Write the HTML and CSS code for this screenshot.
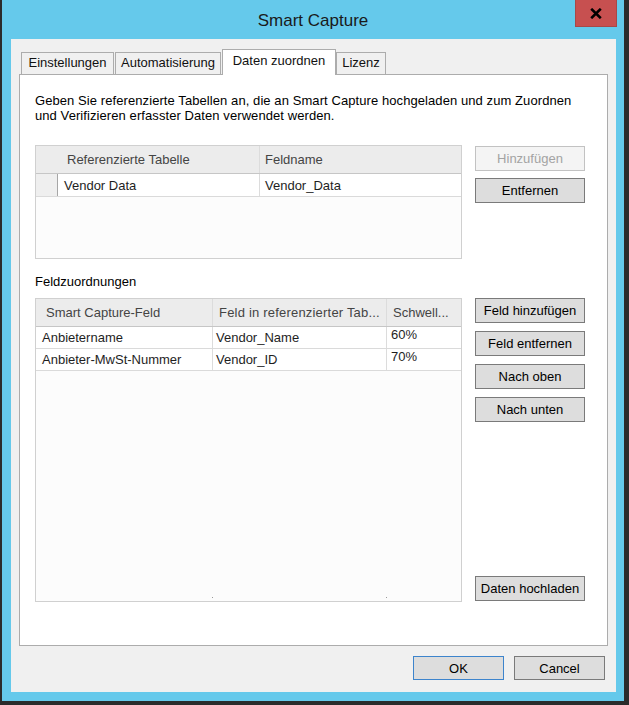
FILE: index.html
```html
<!DOCTYPE html>
<html lang="de">
<head>
<meta charset="utf-8">
<title>Smart Capture</title>
<link rel="stylesheet" href="styles.css">
</head>
<body>
<div class="window">
  <div class="titlebar">
    <div class="title">Smart Capture</div>
    <div class="close">
      <svg width="12" height="11" viewBox="0 0 12 11"><path d="M1.2 0.8 L10.8 10.2 M10.8 0.8 L1.2 10.2" stroke="#000" stroke-width="2.6" fill="none"/></svg>
    </div>
  </div>
  <div class="client">
    <div class="tabs">
      <div class="tab t1">Einstellungen</div>
      <div class="tab t2">Automatisierung</div>
      <div class="tab t3 active">Daten zuordnen</div>
      <div class="tab t4">Lizenz</div>
    </div>
    <div class="panel">
      <p class="desc">Geben Sie referenzierte Tabellen an, die an Smart Capture hochgeladen und zum Zuordnen und Verifizieren erfasster Daten verwendet werden.</p>
      <div class="pair pair-ref">
        <div class="grid grid-ref">
          <div class="ghead">
            <div class="cell rh-head"></div>
            <div class="cell sep c-ref1 hp9">Referenzierte Tabelle</div>
            <div class="cell c-ref2 hp5">Feldname</div>
          </div>
          <div class="grow grow-ref">
            <div class="cell rh"></div>
            <div class="cell sep c-ref1 dp6">Vendor Data</div>
            <div class="cell c-ref2 dp5">Vendor_Data</div>
          </div>
        </div>
        <div class="btns btns-ref">
          <button class="btn disabled">Hinzufügen</button>
          <button class="btn">Entfernen</button>
        </div>
      </div>
      <div class="label">Feldzuordnungen</div>
      <div class="pair pair-map">
        <div class="grid grid-map">
          <div class="ghead">
            <div class="cell sep c-m1 hp10">Smart Capture-Feld</div>
            <div class="cell sep c-m2 hp6 wide">Feld in referenzierter Tab...</div>
            <div class="cell c-m3 hp6">Schwell...</div>
          </div>
          <div class="grow grow-map">
            <div class="cell sep c-m1 dp6">Anbietername</div>
            <div class="cell sep c-m2 dp3">Vendor_Name</div>
            <div class="cell c-m3 dp4 pct">60%</div>
          </div>
          <div class="grow grow-map">
            <div class="cell sep c-m1 dp6">Anbieter-MwSt-Nummer</div>
            <div class="cell sep c-m2 dp3">Vendor_ID</div>
            <div class="cell c-m3 dp4 pct">70%</div>
          </div>
          <div class="gfill"></div>
          <div class="gmarks">
            <div class="mark c-m1"></div>
            <div class="mark c-m2"></div>
          </div>
        </div>
        <div class="btns btns-map">
          <button class="btn">Feld hinzufügen</button>
          <button class="btn">Feld entfernen</button>
          <button class="btn">Nach oben</button>
          <button class="btn">Nach unten</button>
          <button class="btn btn-upload">Daten hochladen</button>
        </div>
      </div>
    </div>
    <div class="footer">
      <button class="btn btn-foot btn-default">OK</button>
      <button class="btn btn-foot">Cancel</button>
    </div>
  </div>
</div>
</body>
</html>
```
FILE: styles.css
```css
* { box-sizing: border-box; }
html, body { margin: 0; padding: 0; }
body {
  width: 629px;
  height: 705px;
  overflow: hidden;
  background: #2b2b2b;
  font-family: "Liberation Sans", Arial, sans-serif;
  font-size: 13px;
  color: #000;
}
.window {
  margin-left: 2px;
  width: 622px;
  height: 701px;
  background: #65c9eb;
  display: flex;
  flex-direction: column;
  padding: 0 8px 9px 9px;
}
.titlebar {
  height: 39px;
  margin: 0 -8px 0 -9px;
  display: grid;
  grid-template-columns: 1fr auto 1fr;
  align-items: start;
}
.title {
  grid-column: 2;
  padding-top: 11px;
  line-height: 20px;
  font-size: 17px;
  color: #1a1a1a;
}
.close {
  grid-column: 3;
  justify-self: end;
  margin-right: 7px;
  width: 42px;
  height: 27px;
  background: #c75050;
  border: 1px solid #a84848;
  border-top: none;
  display: flex;
  align-items: center;
  justify-content: center;
}
.client {
  flex: 1;
  background: #f0f0f0;
  padding: 10px 8px 12px 8px;
  display: flex;
  flex-direction: column;
}
.tabs {
  display: flex;
  align-items: flex-end;
  height: 25px;
  padding-left: 2px;
  position: relative;
  z-index: 1;
}
.tab {
  height: 22px;
  border: 1px solid #acacac;
  border-bottom: none;
  background: #f0f0f0;
  line-height: 20px;
  text-align: center;
  white-space: nowrap;
  color: #111;
}
.t1 { width: 93px; }
.t2 { width: 106px; margin-left: 1px; }
.t3 { width: 114px; margin-left: 1px; }
.t4 { width: 50px; }
.tab.active {
  height: 26px;
  margin-bottom: -1px;
  background: #fff;
  padding-top: 2px;
  line-height: 18px;
}
.panel {
  height: 572px;
  background: #fff;
  border: 1px solid #acacac;
  padding: 18px 0 0 15px;
}
.desc {
  margin: 0;
  max-width: 550px;
  line-height: 15px;
  letter-spacing: 0.08px;
  color: #000;
}
.pair {
  display: flex;
  gap: 13px;
}
.pair-ref { margin-top: 22px; }
.label {
  margin-top: 15px;
  line-height: 15px;
}
.pair-map { margin-top: 9px; }
.grid {
  width: 427px;
  border: 1px solid #d0d0d0;
  background: #fcfcfc;
  display: flex;
  flex-direction: column;
}
.grid-ref { height: 114px; }
.grid-map { height: 304px; }
.ghead {
  display: flex;
  height: 28px;
  background: #ececec;
  border-bottom: 1px solid #c6c6c6;
  color: #444;
  flex: none;
}
.grow {
  display: flex;
  background: #fff;
  border-bottom: 1px solid #dadada;
  color: #1e1e1e;
  flex: none;
}
.grow-ref { height: 23px; }
.grow-map { height: 22px; }
.cell {
  display: flex;
  align-items: center;
  white-space: nowrap;
  overflow: hidden;
}
.wide { letter-spacing: 0.2px; }
.sep { border-right: 1px solid #dcdcdc; }
.rh-head { width: 22px; }
.rh {
  width: 22px;
  background: #efefef;
  border-right: 1px solid #a6a6a6;
}
.c-ref1 { width: 202px; }
.c-ref2 { width: 201px; }
.c-m1 { width: 177px; }
.c-m2 { width: 174px; }
.c-m3 { width: 74px; }
.hp9 { padding-left: 9px; }
.hp10 { padding-left: 10px; }
.hp6 { padding-left: 6px; }
.hp5 { padding-left: 5px; }
.dp6 { padding-left: 6px; }
.dp5 { padding-left: 5px; }
.dp4 { padding-left: 4px; }
.dp3 { padding-left: 3px; }
.pct {
  align-items: flex-start;
  padding-top: 0;
  line-height: 15px;
}
.gfill { flex: 1; }
.gmarks {
  display: flex;
  height: 1px;
  margin-bottom: 3px;
  flex: none;
}
.mark {
  border-right: 1px solid #9a9a9a;
}
.btns {
  width: 110px;
  display: flex;
  flex-direction: column;
}
.btns-ref { gap: 7px; padding-top: 1px; }
.btns-map { gap: 8px; padding-bottom: 1px; }
.btn {
  width: 110px;
  height: 25px;
  padding: 0;
  margin: 0;
  border: 1px solid #7a7a7a;
  background: #dddddd;
  font-family: inherit;
  font-size: 13px;
  color: #000;
  display: flex;
  align-items: center;
  justify-content: center;
  flex: none;
}
.btn.disabled {
  border-color: #c2c2c2;
  background: #f4f4f4;
  color: #a3a3a3;
}
.btn-upload { margin-top: auto; }
.footer {
  display: flex;
  justify-content: flex-end;
  gap: 10px;
  margin-top: 10px;
  padding-right: 3px;
}
.btn-foot {
  width: 91px;
  height: 24px;
}
.btn-default {
  border-color: #3d84cc;
}
```
